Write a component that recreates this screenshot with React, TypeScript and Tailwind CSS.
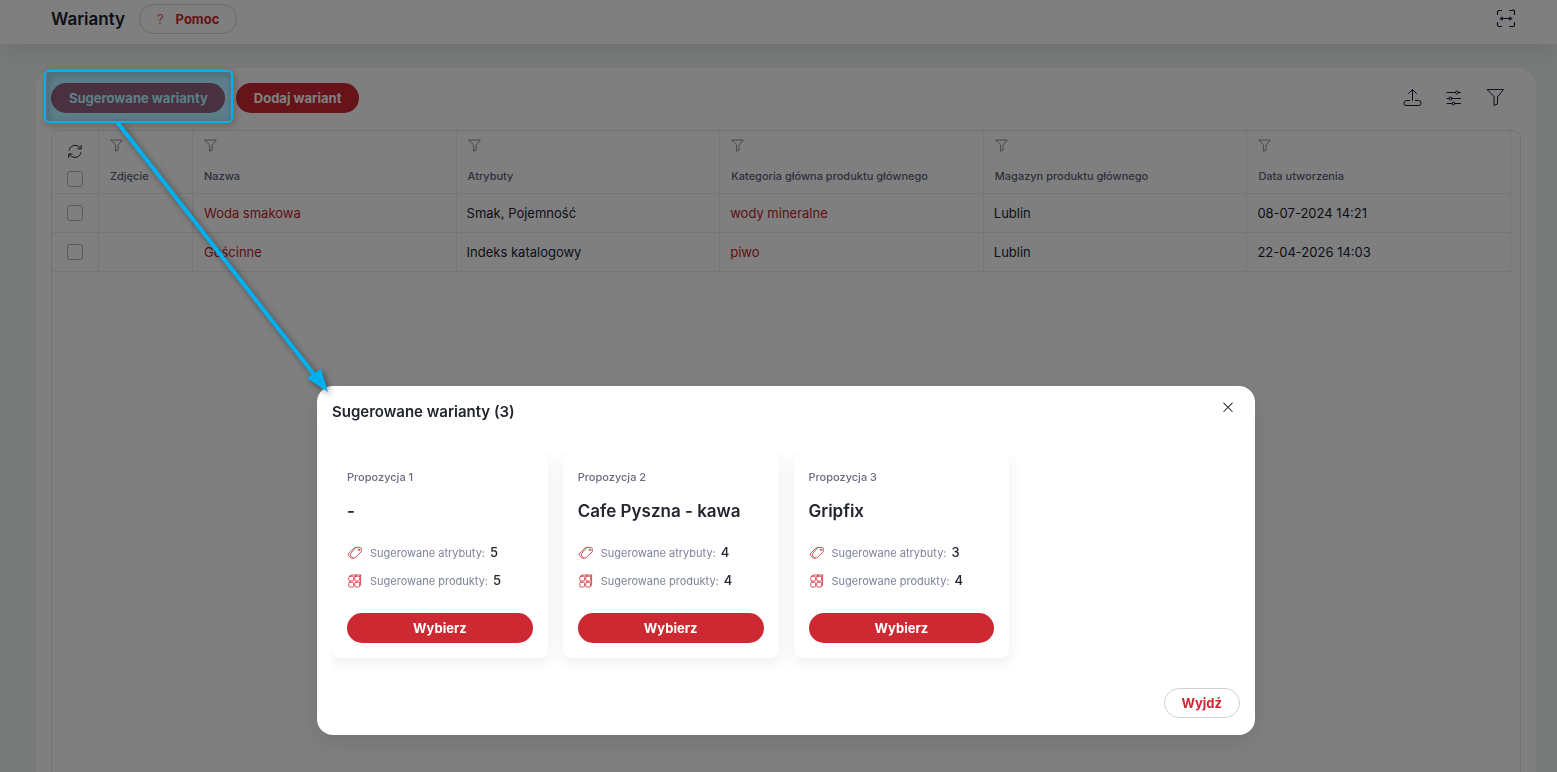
import type { ReactNode } from 'react'

const columns = [
  { label: 'Zdjęcie', width: 'w-[94px]' },
  { label: 'Nazwa', width: '' },
  { label: 'Atrybuty', width: '' },
  { label: 'Kategoria główna produktu głównego', width: '' },
  { label: 'Magazyn produktu głównego', width: '' },
  { label: 'Data utworzenia', width: '' },
]

const rows = [
  {
    name: 'Woda smakowa',
    attributes: 'Smak, Pojemność',
    category: 'wody mineralne',
    store: 'Lublin',
    created: '08-07-2024 14:21',
  },
  {
    name: 'Gościnne',
    attributes: 'Indeks katalogowy',
    category: 'piwo',
    store: 'Lublin',
    created: '22-04-2026 14:03',
  },
]

const proposals = [
  { id: 1, name: '-', attributes: 5, products: 5 },
  { id: 2, name: 'Cafe Pyszna - kawa', attributes: 4, products: 4 },
  { id: 3, name: 'Gripfix', attributes: 3, products: 4 },
]

function Icon({ className, children }: { className: string; children: ReactNode }) {
  return (
    <svg
      viewBox="0 0 20 20"
      fill="none"
      stroke="currentColor"
      strokeWidth="1"
      strokeLinecap="round"
      strokeLinejoin="round"
      className={className}
      aria-hidden="true"
    >
      {children}
    </svg>
  )
}

function FunnelIcon({ className }: { className: string }) {
  return (
    <Icon className={className}>
      <path d="M1.5 1.5h16L11.5 9v7L8 17.5V9z" />
    </Icon>
  )
}

function FitWidthIcon() {
  return (
    <Icon className="size-5">
      <path strokeWidth="1.2" d="M1.5 5.5V3A1.5 1.5 0 0 1 3 1.5h2.500M13.5 1.5H16A1.5 1.5 0 0 1 18.5 3v2.500M18.5 13.5V16A1.5 1.5 0 0 1 17 17.5h-3.500M5.5 17.5H3A1.5 1.5 0 0 1 1.5 16v-2.500" />
      <path d="M4.5 9.5h11" />
      <path d="M4 9.5 6.5 7.8v3.400zM16 9.5l-2.500-1.700v3.400z" fill="currentColor" strokeWidth="0.5" />
    </Icon>
  )
}

function UploadIcon() {
  return (
    <Icon className="size-5">
      <path d="M10.5 12.5V1.500M6.5 5.5l4-4 4 4" />
      <path d="M7.500 12.5H4.500a2.500 2.500 0 0 0-2.500 2.500v.500a2 2 0 0 0 2 2h13a2 2 0 0 0 2-2v-.500a2.500 2.500 0 0 0-2.500-2.500H13.500" />
    </Icon>
  )
}

function SlidersIcon() {
  return (
    <Icon className="size-5">
      <path d="M3 4.500h8.500M14.500 4.500H16.500M3 10.500h2M8 10.500h8.500M3 15.500h5M11 15.500h5.500" />
      <circle cx="13" cy="4.500" r="1.500" />
      <circle cx="6.500" cy="10.500" r="1.500" />
      <circle cx="9.500" cy="15.500" r="1.500" />
    </Icon>
  )
}

function RefreshIcon() {
  return (
    <Icon className="size-4">
      <path strokeWidth="1.2" d="M2.500 9C3.500 5.300 6.500 3 10 3c3 0 5.500 1.400 7.200 4M17.800 3v4.200h-4.200" />
      <path strokeWidth="1.2" d="M17.500 12c-1 3.700-4 6-7.500 6-3 0-5.500-1.400-7.200-4M2.200 18v-4.200h4.200" />
    </Icon>
  )
}

function TagIcon() {
  return (
    <Icon className="size-4">
      <path d="M11.500 3h5l1.300 1v4.500L10.500 15.500 7.500 16.500 4.300 13.500v-2z" />
      <path d="M11.500 3 8.500 4 1.500 11v1.500L5.500 16.500h2" />
      <circle cx="14.800" cy="6" r="1" />
    </Icon>
  )
}

function BoxesIcon() {
  return (
    <Icon className="size-4">
      <rect x="2.200" y="4" width="6" height="6" rx="1.500" />
      <rect x="9.700" y="4" width="6" height="6" rx="1.500" />
      <rect x="2.200" y="11.500" width="6" height="6" rx="1.500" />
      <rect x="9.700" y="11.500" width="6" height="6" rx="1.500" />
      <path d="M3.500 4 5 2.500h12v12.500L15.700 16.500M9.700 4.500l1.500-2M15.700 4.500l1.300-2M15.700 12l1.300-1.500" />
    </Icon>
  )
}

function Checkbox({ label }: { label: string }) {
  return (
    <input
      type="checkbox"
      aria-label={label}
      className="block size-4 appearance-none rounded-[3px] border border-[#b5b5c3] bg-white"
    />
  )
}

function VariantsTable() {
  return (
    <div className="mt-[17px] min-h-[660px] rounded-t-lg border border-[#e4e6ea] pr-[9px]">
      <table className="w-full table-fixed border-separate border-spacing-0">
        <thead>
          <tr className="h-[63px] text-left align-top">
            <th className="w-[47px] border-r border-b border-[#ebedf0] pt-3">
              <div className="flex flex-col items-center gap-3">
                <button type="button" aria-label="Odśwież" className="text-[#181c32]">
                  <RefreshIcon />
                </button>
                <Checkbox label="Zaznacz wszystkie" />
              </div>
            </th>
            {columns.map((c) => (
              <th key={c.label} className={`border-r border-b border-[#ebedf0] pt-2 pl-[11px] font-medium ${c.width}`}>
                <button type="button" aria-label={`Filtruj: ${c.label}`} className="block text-[#5e6278]">
                  <FunnelIcon className="size-[14px]" />
                </button>
                <span className="mt-[15px] block text-[11px] leading-4 whitespace-nowrap text-[#5e6278]">{c.label}</span>
              </th>
            ))}
          </tr>
        </thead>
        <tbody className="text-[13px] text-[#181c32]">
          {rows.map((r) => (
            <tr key={r.name} className="h-[39px]">
              <td className="border-r border-b border-[#ebedf0]">
                <div className="flex justify-center">
                  <Checkbox label={`Zaznacz ${r.name}`} />
                </div>
              </td>
              <td className="border-r border-b border-[#ebedf0]" />
              <td className="border-r border-b border-[#ebedf0] pt-[2px] pl-[11px]">
                <a href="#" className="text-[#c01c2c]">{r.name}</a>
              </td>
              <td className="border-r border-b border-[#ebedf0] pt-[2px] pl-[10px]">{r.attributes}</td>
              <td className="border-r border-b border-[#ebedf0] pt-[2px] pl-[10px]">
                <a href="#" className="text-[#c01c2c]">{r.category}</a>
              </td>
              <td className="border-r border-b border-[#ebedf0] pt-[2px] pl-[10px]">{r.store}</td>
              <td className="border-r border-b border-[#ebedf0] pt-[2px] pl-[10px]">{r.created}</td>
            </tr>
          ))}
        </tbody>
      </table>
    </div>
  )
}

function ProposalCard({ proposal }: { proposal: (typeof proposals)[number] }) {
  return (
    <article className="rounded-lg bg-white p-[15px] shadow-[0_4px_16px_rgba(0,0,0,0.08)]">
      <p className="text-[11px] leading-4 font-medium text-[#6b6b80]">Propozycja {proposal.id}</p>
      <h3 className="mt-[14px] text-[17px] leading-6 font-semibold text-[#22252e]">{proposal.name}</h3>
      <ul className="mt-5 flex flex-col gap-2 text-[11px] text-[#7e8299]">
        <li className="flex h-5 items-center gap-[7px]">
          <span className="text-[#cc2932]"><TagIcon /></span>
          <span className="flex items-center gap-[5px]">
            Sugerowane atrybuty: <b className="text-[13px] font-medium text-[#22252e]">{proposal.attributes}</b>
          </span>
        </li>
        <li className="flex h-5 items-center gap-[7px]">
          <span className="text-[#cc2932]"><BoxesIcon /></span>
          <span className="flex items-center gap-[5px]">
            Sugerowane produkty: <b className="text-[13px] font-medium text-[#22252e]">{proposal.products}</b>
          </span>
        </li>
      </ul>
      <button type="button" className="mt-[22px] h-[30px] w-full rounded-full bg-[#cc2932] pt-px text-[13px] font-bold text-white">
        Wybierz
      </button>
    </article>
  )
}

function SuggestedVariantsDialog() {
  return (
    <div className="fixed inset-0 z-20 flex items-start justify-center overflow-hidden bg-black/50 pt-[386px] pl-[15px]">
      <section
        role="dialog"
        aria-labelledby="dialog-title"
        className="w-full max-w-[938px] rounded-2xl bg-white p-[15px] pb-[17px] shadow-[0_8px_24px_rgba(0,0,0,0.1)]"
      >
        <div className="flex items-start justify-between">
          <h2 id="dialog-title" className="text-[15px] leading-[22px] font-semibold text-[#22252e]">
            Sugerowane warianty ({proposals.length})
          </h2>
          <button type="button" aria-label="Zamknij" className="mr-[5px] text-[#22252e]">
            <Icon className="size-[14px]">
              <path strokeWidth="1.5" d="M4 3l12 12M16 3 4 15" />
            </Icon>
          </button>
        </div>
        <div className="mt-[31px] grid grid-cols-[repeat(auto-fill,minmax(210px,1fr))] gap-[15px] overflow-hidden pb-[15px]">
          {proposals.map((p) => (
            <ProposalCard key={p.id} proposal={p} />
          ))}
        </div>
        <div className="mt-[15px] flex justify-end">
          <button type="button" className="h-[30px] rounded-full border border-[#d0d0da] px-[17px] pt-px text-[13px] font-bold text-[#cc2932]">
            Wyjdź
          </button>
        </div>
      </section>
    </div>
  )
}

// Callout drawn over the page: frame round the button and an arrow to the dialog
function Callout() {
  return (
    <svg className="pointer-events-none absolute top-0 left-0 z-30 h-[420px] w-[360px]" viewBox="0 0 360 420" aria-hidden="true">
      <rect x="45" y="71" width="187" height="51" rx="4" fill="#007ca0" fillOpacity="0.28" />
      <g className="drop-shadow-[2px_2px_3px_rgba(0,0,0,0.45)]">
        <rect x="45" y="71" width="187" height="51" rx="4" fill="none" stroke="#00b0f0" strokeWidth="2" />
        <path d="M117 122 316 377" stroke="#00b0f0" strokeWidth="4" />
        <path d="M328 392 307 378 321 369z" fill="#00b0f0" />
      </g>
    </svg>
  )
}

export default function App() {
  return (
    <div className="relative h-screen overflow-hidden bg-[#f0f5f3] font-['Inter',sans-serif]">
      <header className="relative flex h-11 items-center justify-between bg-white pr-[41px] pb-[6px] pl-[51px] shadow-[0_8px_24px_rgba(0,0,0,0.08)]">
        <div className="flex items-center gap-[14px]">
          <h1 className="pt-px text-[17px] font-semibold text-[#181c32]">Warianty</h1>
          <button type="button" className="flex h-[30px] items-center rounded-full border border-[#d0d0da] px-[17px] pt-px text-[13px] font-bold text-[#cc2932]">
            <span className="mr-3 font-light">?</span>
            Pomoc
          </button>
        </div>
        <button type="button" aria-label="Dopasuj szerokość" className="text-[#181c32]">
          <FitWidthIcon />
        </button>
      </header>

      <main className="mt-6 mr-[21px] ml-9 rounded-[20px] bg-white p-[15px]">
        <div className="flex items-center justify-between">
          <div className="flex gap-[11px] text-[13px] font-bold text-white">
            <button type="button" className="h-[30px] rounded-full bg-[#cc2932] pt-px pr-[17px] pl-[18px]">
              Sugerowane warianty
            </button>
            <button type="button" className="h-[30px] rounded-full bg-[#cc2932] px-[18px] pt-px">
              Dodaj wariant
            </button>
          </div>
          <div className="flex gap-[22px] pr-[15px] text-[#181c32]">
            <button type="button" aria-label="Eksportuj"><UploadIcon /></button>
            <button type="button" aria-label="Ustawienia kolumn"><SlidersIcon /></button>
            <button type="button" aria-label="Filtry"><FunnelIcon className="size-5" /></button>
          </div>
        </div>
        <VariantsTable />
      </main>

      <SuggestedVariantsDialog />
      <Callout />
    </div>
  )
}
